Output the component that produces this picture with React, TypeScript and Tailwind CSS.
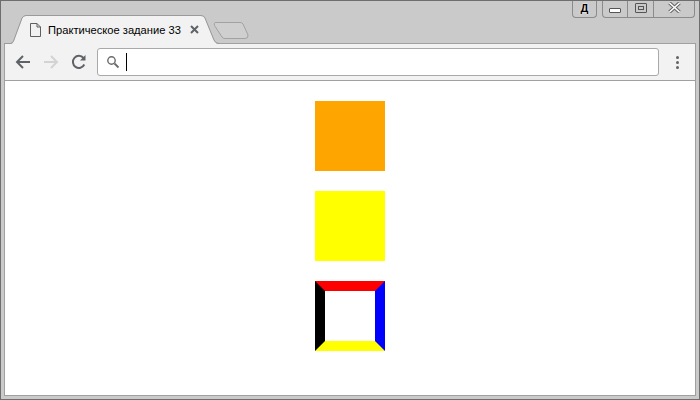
export default function App() {
  return (
    <div className="w-[700px] h-[400px] overflow-hidden border border-[#6e6e6e] bg-[#cacaca] flex flex-col px-[3px] pb-[3px] font-['Liberation_Sans',sans-serif]">
      {/* Title strip */}
      <div className="relative h-[42px] shrink-0">
        {/* Tab and new-tab shapes */}
        <svg className="absolute left-[-4px] top-[-1px] z-10" width="260" height="46" viewBox="0 0 260 46" fill="none">
          <path d="M5 46 L5 44 L10 44 Q13 44 14 41 L22.5 18 Q23.5 16 26 16 L201 16 Q203.5 16 204.5 18 L213.5 40 Q215 44 219 44 L219 46 Z" fill="#f2f2f2" />
          <path d="M4.5 43.5 L10 43.5 Q12.5 43.5 13.5 41 L22 18 Q23.5 15.5 26 15.5 L201 15.5 Q204 15.5 205 18 L214 40 Q215.5 43.5 219 43.5" fill="none" stroke="#9a9a9a" />
          <path d="M215 22.5 L240 22.5 Q242 22.5 243 24 L248 35 Q248.5 38.5 245 38.5 L225 38.5 Q223 38.5 222 37 L214.5 25.5 Q214 22.5 215 22.5 Z" fill="#cfcfcf" stroke="#a2a2a2" />
          <path d="M30.5 23.5 L37 23.5 L40.5 27 L40.5 36.5 L30.5 36.5 Z M37 23.5 L37 27 L40.5 27" fill="none" stroke="#5f5f5f" />
          <path d="M191 26 L198 33 M198 26 L191 33" stroke="#5f6368" strokeWidth="2" />
        </svg>
        <span className="absolute z-20 left-[44px] top-[21px] text-[11.15px] leading-[16px] text-black whitespace-nowrap">
          Практическое задание 33
        </span>

        {/* Window controls */}
        <div className="absolute right-[1px] top-[-1px] flex items-start">
          <div className="mr-[5px] w-[25px] h-[18px] border border-t-0 border-[#8b8b8b] rounded-b-[4px] flex items-center justify-center">
            <span className="text-[11px] leading-none font-bold text-black [text-shadow:0_0_1px_#fff,0_0_2px_#fff]">Д</span>
          </div>
          <div className="flex h-[18px] border border-t-0 border-[#8b8b8b] rounded-b-[4px]">
            <div className="w-[25px] flex items-center justify-center border-r border-[#8b8b8b]">
              <div className="w-[12px] h-[5px] mt-[3px] border border-[#555] bg-white rounded-[1px]" />
            </div>
            <div className="w-[26px] flex items-center justify-center border-r border-[#8b8b8b]">
              <div className="w-[12px] h-[10px] border border-[#555] rounded-[1px] flex items-center justify-center mb-[2px]">
                <div className="w-[6px] h-[4px] border border-[#555]" />
              </div>
            </div>
            <div className="w-[40px] flex items-center justify-center">
              <svg width="13" height="11" viewBox="0 0 13 11" className="mb-[2px]">
                <path d="M1.5 1 L11.5 10 M11.5 1 L1.5 10" stroke="#666" strokeWidth="3.6" />
                <path d="M1.5 1 L11.5 10 M11.5 1 L1.5 10" stroke="#fff" strokeWidth="1.6" />
              </svg>
            </div>
          </div>
        </div>
      </div>

      {/* Toolbar */}
      <div className="h-[38px] shrink-0 bg-[#f2f2f2] border border-[#a0a0a0] flex items-center">
        <svg width="18" height="18" viewBox="0 0 18 18" className="ml-[9px]" fill="none">
          <path d="M16 9 H3 M9 3 L3 9 L9 15" stroke="#5f6368" strokeWidth="2" />
        </svg>
        <svg width="18" height="18" viewBox="0 0 18 18" className="ml-[10px]" fill="none">
          <path d="M2 9 H15 M9 3 L15 9 L9 15" stroke="#d3d3d3" strokeWidth="2" />
        </svg>
        <svg width="18" height="18" viewBox="0 0 18 18" className="ml-[10px]" fill="none">
          <path d="M14.3 11.5 A6 6 0 1 1 13.5 5" stroke="#5f6368" strokeWidth="2" />
          <path d="M15.5 2 V7.5 H10 Z" fill="#5f6368" />
        </svg>
        <div className="ml-[9px] w-[562px] h-[28px] bg-white border border-[#a9a9a9] rounded-[3px] flex items-center">
          <svg width="14" height="14" viewBox="0 0 14 14" className="ml-[8px]" fill="none">
            <circle cx="5.5" cy="5.5" r="3.7" stroke="#6a6a6a" strokeWidth="1.4" />
            <path d="M8.5 8.5 L12.5 12.5" stroke="#6a6a6a" strokeWidth="1.8" />
          </svg>
          <div className="ml-[6px] w-px h-[18px] bg-black" />
        </div>
        <div className="ml-[17px] flex flex-col gap-[2px]">
          <div className="w-[3px] h-[3px] rounded-full bg-[#5f6368]" />
          <div className="w-[3px] h-[3px] rounded-full bg-[#5f6368]" />
          <div className="w-[3px] h-[3px] rounded-full bg-[#5f6368]" />
        </div>
      </div>

      {/* Page */}
      <div className="flex-1 bg-white border-x border-b border-[#a0a0a0] flex flex-col items-center pt-[20px] gap-[20px]">
        <div className="w-[70px] h-[70px] bg-[#ffa500]" />
        <div className="w-[70px] h-[70px] bg-[#ffff00]" />
        <div className="w-[70px] h-[70px] border-[10px] border-t-[#ff0000] border-r-[#0000ff] border-b-[#ffff00] border-l-[#000000]" />
      </div>
    </div>
  );
}
